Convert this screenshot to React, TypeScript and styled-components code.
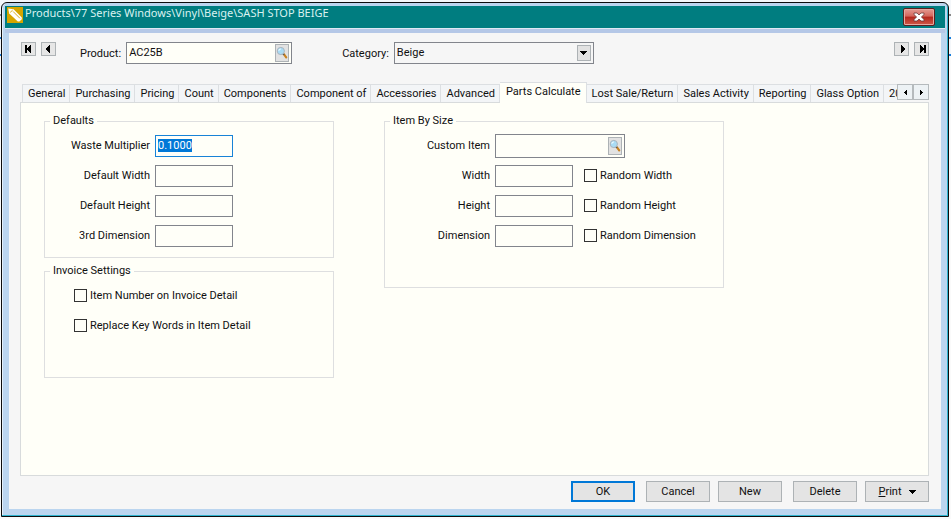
import React, { useEffect, useRef } from "react";
import styled, { createGlobalStyle, css } from "styled-components";

const ui = `11px Roboto, "Liberation Sans", sans-serif`;

const GlobalStyle = createGlobalStyle`
  * { box-sizing: border-box; }
  body { margin: 0; color: #101010; font: ${ui}; }
  button, input, select { font: inherit; color: inherit; margin: 0; }
`;

const Desktop = styled.div`
  display: flex;
  min-height: 100vh;
  padding: 2px 2px 2px 1px;
  background: linear-gradient(
    #f4f7fa 14px, #8a8a8a 14px 16px, #f4f7fa 16px 37px, #1a7fdc 37px 39px,
    #f4f7fa 39px 54px, #1a7fdc 54px 56px, #fafafa 56px
  );
`;

const Window = styled.main`
  flex: 1;
  min-width: 0;
  display: flex;
  flex-direction: column;
  padding: 3px 7px 7px 7px;
  border: 1px solid #0c0c0c;
  border-radius: 6px 6px 0 0;
  background: #bbd5ef;
  box-shadow: inset -1px -1px 0 #2fb4cf, inset 1px 0 0 #e4f0fa;
`;

const TitleBar = styled.header`
  display: flex;
  align-items: flex-start;
  height: 22px;
  margin: 0 -4px;
  padding: 1px 10px 0 2px;
  background: #007d80;
  color: #d9f2f0;
`;

const Title = styled.h1`
  flex: 1;
  min-width: 0;
  margin: 0;
  padding-left: 2px;
  font: 11px/12px "Noto Sans", "Open Sans", sans-serif;
  white-space: nowrap;
`;

const CloseButton = styled.button`
  display: flex;
  align-items: center;
  justify-content: center;
  width: 32px;
  height: 18px;
  margin-top: 1px;
  padding: 0;
  border: 1px solid #5a1f1f;
  border-radius: 2px;
  background: linear-gradient(#e39a92, #d4655b 45%, #b3261c 50%, #cf5a48);
  box-shadow: inset 0 0 0 1px #e6a8a0;
`;

const Band = styled.div`
  height: 5px;
  margin: 0 -4px;
  border-top: 1px solid #dfe9f3;
  background: #b5c8e7;
`;

const Content = styled.div`
  flex: 1;
  display: flex;
  flex-direction: column;
  padding: 9px 12px 7px 11px;
  background: #f6f6f6;
`;

const Toolbar = styled.div`
  display: flex;
  align-items: flex-start;
  padding: 0 0 18px 1px;
`;

const NavGroup = styled.div`
  display: flex;
  gap: 5px;
`;

const NavButton = styled.button`
  display: flex;
  align-items: center;
  justify-content: center;
  width: 15px;
  height: 14px;
  padding: 0;
  border: 1px solid #adb2b5;
  background: #e6e6e6;
`;

const HeaderFields = styled.div`
  flex: 1;
  display: flex;
  gap: 50px;
  padding-left: 24px;
`;

const HeaderField = styled.div`
  display: flex;
  align-items: center;
  gap: 5px;
`;

const FieldBox = styled.div<{ $wide?: boolean }>`
  display: flex;
  align-items: center;
  flex: none;
  width: ${p => (p.$wide ? 166 : 130)}px;
  height: ${p => (p.$wide ? 22 : 24)}px;
  padding-right: 2px;
  border: 1px solid #82858c;
  background: #fffff8;
`;

const BareInput = styled.input`
  flex: 1;
  min-width: 0;
  padding: 0 2px 2px;
  border: 0;
  outline: 0;
  background: none;
`;

const LookupButton = styled.button`
  display: flex;
  align-items: center;
  justify-content: center;
  width: 14px;
  height: 18px;
  padding: 0;
  border: 1px solid #adb2b5;
  background: #e2e2e2;
`;

const SelectWrap = styled.div`
  position: relative;
  width: 200px;
`;

const Select = styled.select`
  appearance: none;
  display: block;
  width: 100%;
  height: 22px;
  padding: 0 18px 2px 2px;
  border: 1px solid #82858c;
  border-radius: 0;
  background: #f6f6f6;
`;

const SelectArrow = styled.span`
  position: absolute;
  top: 3px;
  right: 3px;
  bottom: 3px;
  width: 14px;
  display: flex;
  align-items: center;
  justify-content: center;
  border: 1px solid #adb2b5;
  background: #e2e2e2;
  pointer-events: none;
`;

const TabStrip = styled.div`
  position: relative;
  z-index: 1;
  display: flex;
  margin-bottom: -1px;
  padding-left: 2px;
`;

const TabList = styled.div`
  flex: 1;
  min-width: 0;
  display: flex;
  align-items: flex-end;
  overflow: hidden;
`;

const Tab = styled.button<{ $active?: boolean }>`
  flex: none;
  height: 18px;
  margin: 0 0 1px;
  padding: 0 4px 0 5px;
  border: solid #dcdfe2;
  border-width: 1px 1px 0 0;
  background: #f3f5f7;
  line-height: 16px;
  white-space: nowrap;
  &:first-child { border-left-width: 1px; }
  ${p => p.$active && css`
    height: 21px;
    margin: 0;
    padding: 0 5px 3px 6px;
    background: #fffff8;
  `}
`;

const TabScroll = styled.div`
  display: flex;
  flex: none;
  padding-top: 2px;
`;

const TabScrollButton = styled.button`
  display: flex;
  align-items: center;
  justify-content: center;
  width: 16px;
  height: 16px;
  padding: 0;
  border: 1px solid #b5babd;
  background: #edf2f5;
`;

const Panel = styled.section`
  flex: 1;
  display: grid;
  grid-template-columns: minmax(0, 290px) minmax(0, 340px);
  align-items: start;
  gap: 50px;
  padding: 11px 23px;
  border: 1px solid #d8dbdc;
  background: #fffff8;
`;

const Column = styled.div`
  display: flex;
  flex-direction: column;
  gap: 6px;
`;

const Group = styled.fieldset<{ $roomy?: boolean }>`
  display: flex;
  flex-direction: column;
  gap: 8px;
  min-width: 0;
  margin: 0;
  padding: 7px 0 ${p => (p.$roomy ? 40 : 10)}px;
  border: 1px solid #dedfe0;
`;

const Legend = styled.legend`
  margin-left: 5px;
  padding: 0 3px;
  line-height: 14px;
`;

const Row = styled.div<{ $indent?: boolean }>`
  display: flex;
  align-items: center;
  height: 22px;
  padding-left: ${p => (p.$indent ? 29 : 0)}px;
`;

const RowLabel = styled.label`
  flex: none;
  width: 110px;
  padding: 0 5px 2px 0;
  text-align: right;
  white-space: nowrap;
`;

const TextInput = styled.input`
  flex: none;
  width: 78px;
  height: 22px;
  margin-right: 11px;
  padding: 0 2px 2px;
  border: 1px solid #82858c;
  border-radius: 0;
  outline: 0;
  background: #fffff8;
  &:focus { border-color: #1883d7; }
  &::selection { background: #0078d7; color: #fff; }
`;

const CheckLabel = styled.label`
  display: flex;
  align-items: center;
  gap: 3px;
  padding-bottom: 1px;
  white-space: nowrap;
`;

const CheckBox = styled.input`
  appearance: none;
  width: 13px;
  height: 13px;
  border: 1px solid #333;
  background: #fffff8;
  &:checked { background: #0078d7; box-shadow: inset 0 0 0 2px #fffff8; }
`;

const Footer = styled.footer`
  display: flex;
  justify-content: flex-end;
  gap: 11px;
  padding-top: 5px;
`;

const ButtonPair = styled.div`
  display: flex;
  gap: 8px;
`;

const PushButton = styled.button<{ $primary?: boolean }>`
  display: flex;
  align-items: center;
  justify-content: center;
  gap: 7px;
  width: 64px;
  height: 21px;
  padding: 0;
  border: ${p => (p.$primary ? "2px solid #0078d7" : "1px solid #adb2b5")};
  background: #e4e4e4;
`;

const Glyph = ({ d, w = 8, h = 8 }: { d: string; w?: number; h?: number }) => (
  <svg width={w} height={h} viewBox={`0 0 ${w} ${h}`} fill="#000" shapeRendering="crispEdges" aria-hidden="true">
    <path d={d} />
  </svg>
);

const AppIcon = () => (
  <svg width="16" height="16" viewBox="0 0 16 16" aria-hidden="true">
    <rect width="16" height="16" fill="#d6a500" />
    <path d="M1.2 1.6 6.6 2.2 14.8 10.4V12.2L12.4 14.6H10.8L2.2 6.4Z" fill="#fff" />
    <path d="M3.2 5.4 5.6 3.2M6 4.4 13 11.4" stroke="#d6a500" strokeWidth=".9" fill="none" />
  </svg>
);

const Magnifier = () => (
  <svg width="12" height="14" viewBox="0 0 12 14" aria-hidden="true">
    <path d="M7.8 8.2 10.2 11.4" stroke="#c9821f" strokeWidth="2.2" strokeLinecap="round" />
    <path d="M6.8 7.4 8 8.8" stroke="#4b5157" strokeWidth="1.6" />
    <circle cx="4.8" cy="5" r="3.6" fill="#a9dcf6" stroke="#a9b4bd" />
    <path d="M2.8 4.8Q3 3 5 3" stroke="#eefaff" strokeWidth="1.2" fill="none" />
  </svg>
);

const LEFT = "M5 0V8H4V7H3V6H2V5H1V3H2V2H3V1H4V0Z";
const RIGHT = "M3 0V8H4V7H5V6H6V5H7V3H6V2H5V1H4V0Z";
const FIRST = "M0 0H2V8H0ZM6 0V8H5V7H4V6H3V5H2V3H3V2H4V1H5V0Z";
const LAST = "M6 0H8V8H6ZM2 0V8H3V7H4V6H5V5H6V3H5V2H4V1H3V0Z";
const DOWN = "M0 0H7V1H6V2H5V3H4V4H3V3H2V2H1V1H0Z";

const tabs = [
  "General", "Purchasing", "Pricing", "Count", "Components", "Component of", "Accessories", "Advanced",
  "Parts Calculate", "Lost Sale/Return", "Sales Activity", "Reporting", "Glass Option", "20",
];

export default function App() {
  const waste = useRef<HTMLInputElement>(null);
  useEffect(() => {
    waste.current?.focus();
    waste.current?.select();
  }, []);

  return (
    <Desktop>
      <GlobalStyle />
      <Window>
        <TitleBar>
          <AppIcon />
          <Title>Products\77 Series Windows\Vinyl\Beige\SASH STOP BEIGE</Title>
          <CloseButton aria-label="Close">
            <svg width="12" height="10" viewBox="0 0 12 10" aria-hidden="true">
              <path d="M1 1H4L6 3 8 1H11V2.6L8.4 5 11 7.4V9H8L6 7 4 9H1V7.4L3.6 5 1 2.6Z" fill="#fff" stroke="#6b3a3a" strokeWidth=".8" />
            </svg>
          </CloseButton>
        </TitleBar>
        <Band />
        <Content>
          <Toolbar>
            <NavGroup>
              <NavButton aria-label="First"><Glyph d={FIRST} /></NavButton>
              <NavButton aria-label="Previous"><Glyph d={LEFT} /></NavButton>
            </NavGroup>
            <HeaderFields>
              <HeaderField>
                <label htmlFor="product">Product:</label>
                <FieldBox $wide>
                  <BareInput id="product" defaultValue="AC25B" />
                  <LookupButton aria-label="Find product"><Magnifier /></LookupButton>
                </FieldBox>
              </HeaderField>
              <HeaderField>
                <label htmlFor="category">Category:</label>
                <SelectWrap>
                  <Select id="category" defaultValue="Beige"><option>Beige</option></Select>
                  <SelectArrow><Glyph w={7} h={4} d={DOWN} /></SelectArrow>
                </SelectWrap>
              </HeaderField>
            </HeaderFields>
            <NavGroup>
              <NavButton aria-label="Next"><Glyph d={RIGHT} /></NavButton>
              <NavButton aria-label="Last"><Glyph d={LAST} /></NavButton>
            </NavGroup>
          </Toolbar>

          <TabStrip>
            <TabList role="tablist">
              {tabs.map(t => (
                <Tab key={t} role="tab" aria-selected={t === "Parts Calculate"} $active={t === "Parts Calculate"}>{t}</Tab>
              ))}
            </TabList>
            <TabScroll>
              <TabScrollButton aria-label="Scroll tabs left"><Glyph w={3} h={5} d="M3 0V5H2V4H1V3H0V2H1V1H2V0Z" /></TabScrollButton>
              <TabScrollButton aria-label="Scroll tabs right"><Glyph w={3} h={5} d="M0 0V5H1V4H2V3H3V2H2V1H1V0Z" /></TabScrollButton>
            </TabScroll>
          </TabStrip>

          <Panel role="tabpanel" aria-label="Parts Calculate">
            <Column>
              <Group>
                <Legend>Defaults</Legend>
                <Row>
                  <RowLabel htmlFor="waste">Waste Multiplier</RowLabel>
                  <TextInput id="waste" ref={waste} defaultValue="0.1000" />
                </Row>
                {["Default Width", "Default Height", "3rd Dimension"].map(l => (
                  <Row key={l}>
                    <RowLabel htmlFor={l}>{l}</RowLabel>
                    <TextInput id={l} />
                  </Row>
                ))}
              </Group>
              <Group $roomy>
                <Legend>Invoice Settings</Legend>
                {["Item Number on Invoice Detail", "Replace Key Words in Item Detail"].map(l => (
                  <Row key={l} $indent>
                    <CheckLabel><CheckBox type="checkbox" />{l}</CheckLabel>
                  </Row>
                ))}
              </Group>
            </Column>
            <Group $roomy>
              <Legend>Item By Size</Legend>
              <Row>
                <RowLabel htmlFor="custom">Custom Item</RowLabel>
                <FieldBox>
                  <BareInput id="custom" />
                  <LookupButton aria-label="Find custom item"><Magnifier /></LookupButton>
                </FieldBox>
              </Row>
              {["Width", "Height", "Dimension"].map(l => (
                <Row key={l}>
                  <RowLabel htmlFor={l}>{l}</RowLabel>
                  <TextInput id={l} />
                  <CheckLabel><CheckBox type="checkbox" />{`Random ${l}`}</CheckLabel>
                </Row>
              ))}
            </Group>
          </Panel>

          <Footer>
            <PushButton $primary>OK</PushButton>
            <ButtonPair>
              <PushButton>Cancel</PushButton>
              <PushButton>New</PushButton>
            </ButtonPair>
            <ButtonPair>
              <PushButton>Delete</PushButton>
              <PushButton>
                <span><u>P</u>rint</span>
                <Glyph w={7} h={4} d={DOWN} />
              </PushButton>
            </ButtonPair>
          </Footer>
        </Content>
      </Window>
    </Desktop>
  );
}
